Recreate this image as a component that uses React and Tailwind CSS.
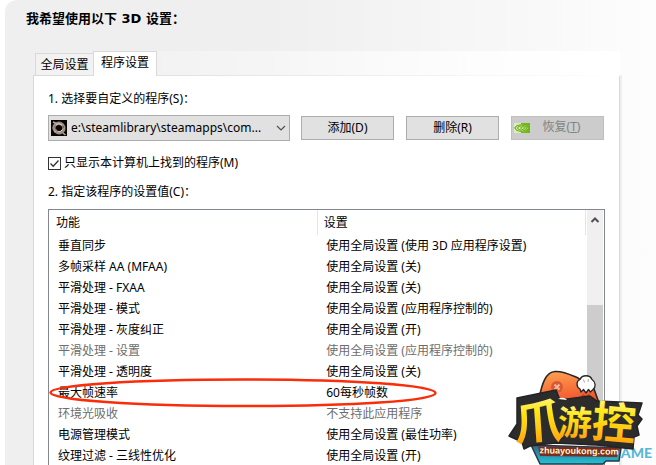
import React from "react";

const rows = [
  { name: "垂直同步", value: "使用全局设置 (使用 3D 应用程序设置)" },
  { name: "多帧采样 AA (MFAA)", value: "使用全局设置 (关)" },
  { name: "平滑处理 - FXAA", value: "使用全局设置 (关)" },
  { name: "平滑处理 - 模式", value: "使用全局设置 (应用程序控制的)" },
  { name: "平滑处理 - 灰度纠正", value: "使用全局设置 (开)" },
  { name: "平滑处理 - 设置", value: "使用全局设置 (应用程序控制的)", disabled: true },
  { name: "平滑处理 - 透明度", value: "使用全局设置 (关)" },
  { name: "最大帧速率", value: "60每秒帧数", marked: true },
  { name: "环境光吸收", value: "不支持此应用程序", disabled: true },
  { name: "电源管理模式", value: "使用全局设置 (最佳功率)" },
  { name: "纹理过滤 - 三线性优化", value: "使用全局设置 (开)" },
];

function GameIcon() {
  return (
    <svg className="pointer-events-none absolute left-[3px] top-[5px] h-4 w-4" viewBox="0 0 16 16" aria-hidden="true">
      <rect width="16" height="16" fill="#080605" />
      <ellipse cx="8" cy="8" rx="5" ry="4.6" fill="none" stroke="#a08e84" strokeWidth="3.4" transform="rotate(25 8 8)" />
      <path d="M2 2l3.500 1.500M12 13l2.500 2M3.500 10.500l1 2" stroke="#b7a69b" strokeWidth="1.600" />
      <path d="M5 4.500Q8 2.600 11 5M11.600 9.500Q10 12 7 11.800" stroke="#d8cdc3" strokeWidth="1" fill="none" />
      <path d="M4 6.500l1 3M12 6l.6 1.600" stroke="#5d4f48" strokeWidth="1" />
    </svg>
  );
}

function NvidiaIcon() {
  return (
    <svg className="absolute left-[2px] top-[6px] h-[10px] w-4" viewBox="0 0 16 10" aria-hidden="true">
      <rect width="16" height="10" fill="#dcebc4" />
      <path d="M7 0h9v10H7V9c3 0 5-1.500 7-4-2-2.500-4-3.600-7-3.600z" fill="#74b71b" />
      <path d="M.8 4.800C3 1.500 9 .2 13 4.600 10.500 9.300 3.500 9.800 .8 4.800z" fill="#dcebc4" stroke="#74b71b" strokeWidth="1.200" />
      <path d="M3.400 5C5 2.500 8.500 2.300 10.800 4.700 8.800 7.700 5 8 3.400 5z" fill="#dcebc4" stroke="#74b71b" strokeWidth="1.100" />
      <path d="M5.800 4.900C7 3.700 8 4 8.800 4.800 8 6 6.800 6.400 5.800 4.900z" fill="#74b71b" />
    </svg>
  );
}

function SiteLogo() {
  return (
    <svg className="pointer-events-none absolute bottom-0 right-0 h-[105px] w-[156px]" viewBox="0 0 156 105" role="img" aria-label="爪游控 zhuayoukong.com">
      <defs>
        <linearGradient id="gold" x1="0" y1="0" x2="0" y2="1">
          <stop offset="0.15" stopColor="#fff7a0" />
          <stop offset="0.4" stopColor="#ffe714" />
          <stop offset="0.65" stopColor="#ffc814" />
          <stop offset="1" stopColor="#ff8a08" />
        </linearGradient>
        <linearGradient id="cap" x1="0" y1="0" x2="0.3" y2="1">
          <stop offset="0" stopColor="#ffa552" />
          <stop offset="1" stopColor="#f0522b" />
        </linearGradient>
        <linearGradient id="ribbon" x1="0" y1="0" x2="0" y2="1">
          <stop offset="0" stopColor="#2a6486" />
          <stop offset="1" stopColor="#22c4d8" />
        </linearGradient>
      </defs>
      <text x="152" y="97" textAnchor="end" fontSize="14" className="font-['Lato'] font-black" fill="#58b8d8">AME</text>
      <path d="M39 38C42 22 46 11 55 10.500C64 10 71 14 78 17L94 28L99 42L64 44z" fill="url(#cap)" stroke="#262626" strokeWidth="1.600" />
      <circle cx="57" cy="26" r="6" fill="#d65b35" />
      <path d="M54.500 23.500l5 5m0-5l-5 5" stroke="#ffb69a" strokeWidth="1.800" />
      <path d="M80 36l3-3 3 2 4-3-2 5-5 1z" fill="#c63f25" />
      <path d="M80 28C76 26 76 20 80 18.500C82 13.500 90 13.500 92 18.500C96 21 96 26 93 28.500L90.500 31 88.500 28.500 86 32 83.500 28.500 81 31z" fill="#fff" stroke="#262626" strokeWidth="1.300" strokeLinejoin="round" />
      <path d="M83.500 18.500l1 3M88.500 18l-.5 3" stroke="#a9a9a9" strokeWidth="1" />
      <path d="M31 84L121 87L119 100L106 100L103 103L40 103z" fill="url(#ribbon)" stroke="#293642" strokeWidth="1.500" strokeLinejoin="round" />
      <path d="M17 37L56 29L60 39L90 35L97 40L142 42L138 54L142 58L137 65L139 74L134 76L133 88L97 84L55 82L30 85L24 88L22 81L9 75L17 63z" fill="#2c2c2c" stroke="#232323" strokeWidth="1.500" strokeLinejoin="round" />
      <path d="M58 38q6-3 9 1z" fill="#fff" />
      <g className="font-['Noto_Sans_CJK_SC'] font-bold" fill="url(#gold)">
        <text x="14" y="78" fontSize="48" transform="rotate(-4 38 60)">爪</text>
        <text x="58" y="74" fontSize="34" transform="rotate(2 74 60)">游</text>
        <text x="92" y="78" fontSize="44" transform="rotate(5 113 62)">控</text>
      </g>
      <path d="M38 85.500L119 87L117 96L40 95z" fill="#7b2b20" />
      <text x="79" y="93" textAnchor="middle" fontSize="9" transform="rotate(1 79 91)" className="font-['Liberation_Sans'] font-bold" fill="#fff4c8">zhuayoukong.com</text>
    </svg>
  );
}

const actionButton = "relative h-6 w-[93px] border border-[#adadad] bg-[#e1e1e1] pb-px text-center";

export default function App() {
  return (
    <div className="relative min-h-screen overflow-hidden bg-white pl-[5px] font-['Noto_Sans','Noto_Sans_CJK_SC',sans-serif] text-xs text-black">
      <main className="flex min-h-screen flex-col rounded-tl-xl bg-linear-to-r from-[#efefef] from-40% to-[#fdfdfd] pl-7 pr-[36px]">
        <h1 className="-ml-[7px] flex h-[51px] items-start pt-[9px] text-[13px] leading-5 font-bold font-['DejaVu_Sans','Noto_Sans_CJK_SC',sans-serif]">
          我希望使用以下 3D 设置：
        </h1>
        <div role="tablist" className="relative z-10 -mb-px flex items-end bg-linear-to-r from-transparent to-white pl-0.5">
          <button role="tab" aria-selected="false" className="mb-px h-[22px] w-[58px] border border-r-0 border-b-0 border-[#d9d9d9] bg-[#f2f2f2]">全局设置</button>
          <button role="tab" aria-selected="true" className="h-[25px] w-16 border border-b-0 border-[#d9d9d9] bg-white pb-0.5">程序设置</button>
        </div>
        <section className="flex flex-1 flex-col border border-b-0 border-[#d9d9d9] bg-white px-3.5 pt-3.5 shadow-[2px_0_0_#efefef]">
          <label htmlFor="program" className="h-[25px] leading-[18px]">1. 选择要自定义的程序(S)：</label>
          <div className="flex items-center gap-3 pr-px">
            <div className="relative -mr-px h-[26px] min-w-0 flex-1">
              <select id="program" className="h-full w-full appearance-none border border-[#adadad] bg-[#e1e1e1] pl-[22px] pr-3">
                <option>e:\steamlibrary\steamapps\com...</option>
              </select>
              <GameIcon />
              <svg className="pointer-events-none absolute right-1 top-[10px] h-[7px] w-[10px]" viewBox="0 0 10 7" fill="none" stroke="#505050" strokeWidth="1.200" aria-hidden="true"><path d="M1 1l4 4 4-4" /></svg>
            </div>
            <button className={actionButton}>添加(D)</button>
            <button className={actionButton}>删除(R)</button>
            <button disabled className="relative h-6 w-[93px] border border-[#bfbfbf] bg-[#cccccc] pl-2 pb-0.5 text-[#838383]">
              <NvidiaIcon />
              恢复(<u>T</u>)
            </button>
          </div>
          <label className="mt-3.5 flex h-4 items-center gap-[3px]">
            <input type="checkbox" defaultChecked className="peer h-[13px] w-[13px] shrink-0 appearance-none border border-[#333] bg-white" />
            <svg className="-ml-4 h-[13px] w-[13px] opacity-0 peer-checked:opacity-100" viewBox="0 0 13 13" fill="none" stroke="#333" strokeWidth="1.300" aria-hidden="true"><path d="M2.500 6.500l2.700 2.800L10.500 3.500" /></svg>
            <span>只显示本计算机上找到的程序(M)</span>
          </label>
          <h2 className="mt-3 h-[26px] leading-[18px]">2. 指定该程序的设置值(C)：</h2>
          <div className="flex flex-1 border border-b-0 border-[#828790]">
            <table className="h-px flex-1 table-fixed border-collapse text-left">
              <thead>
                <tr className="h-[25px]">
                  <th className="w-1/2 border-r border-[#e5e5e5] pl-[7px] font-normal">功能</th>
                  <th className="w-1/2 border-r border-[#e5e5e5] pl-1.5 font-normal">设置</th>
                </tr>
              </thead>
              <tbody>
                {rows.map((row) => (
                  <tr key={row.name} className={row.disabled ? "h-[21px] text-[#6d6d6d]" : "h-[21px]"}>
                    <td className="relative p-0 pl-[9px] leading-[20px]">
                      {row.name}
                      {row.marked && (
                        <svg className="pointer-events-none absolute -top-1 left-0 h-[30px] w-[388px] max-w-none" viewBox="0 0 388 30" fill="none" stroke="#fa2c0a" aria-hidden="true">
                          <path d="M386.500 15C386.500 7 302 1.500 194 1.500S1.500 7 1.500 14.500 86 28 194 28 386.500 23 386.500 15z" strokeWidth="2.500" />
                        </svg>
                      )}
                    </td>
                    <td className="p-0 pl-[9px] leading-[20px]">{row.value}</td>
                  </tr>
                ))}
              </tbody>
            </table>
            <div className="ml-px flex w-[17px] flex-col border-r border-white bg-[#f0f0f0]" aria-hidden="true">
              <svg className="mx-auto mt-[6px] h-2 w-2.5" viewBox="0 0 10 8" fill="none" stroke="#505050" strokeWidth="2"><path d="M1.500 6L5 2.500 8.500 6" /></svg>
              <div className="mt-[81px] w-full flex-1 bg-[#cdcdcd]" />
            </div>
          </div>
        </section>
      </main>
      <SiteLogo />
    </div>
  );
}
